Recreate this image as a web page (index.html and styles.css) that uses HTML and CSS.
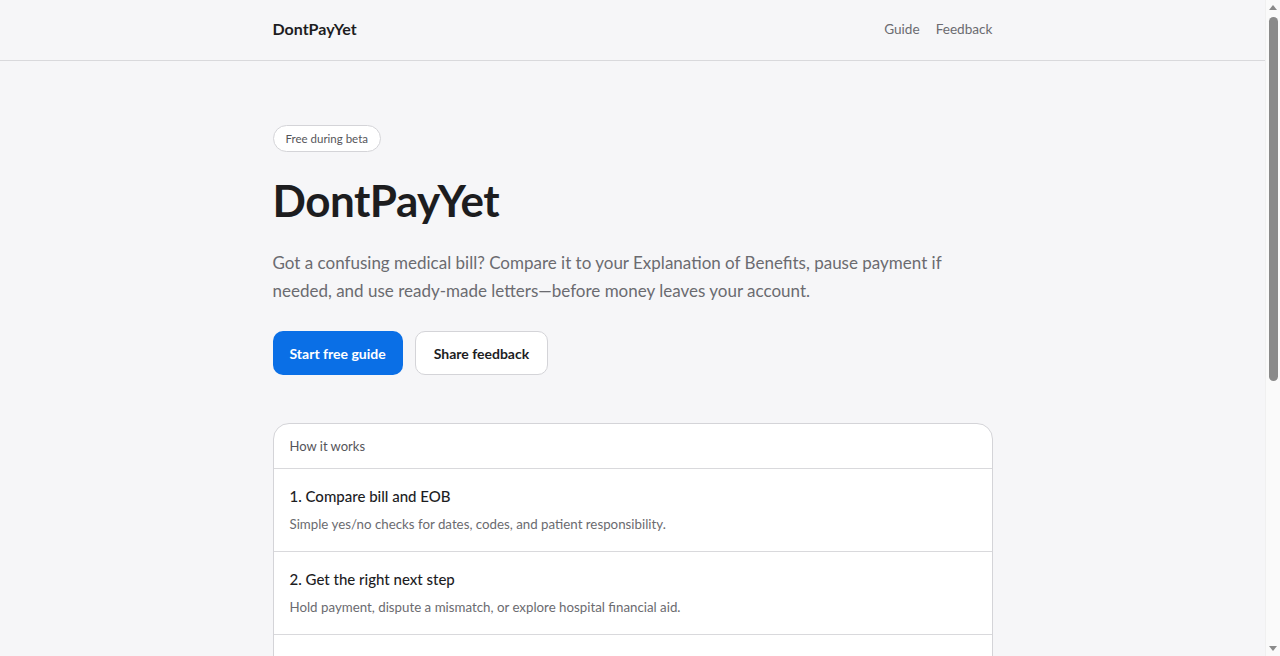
FILE: index.html
```html
<!DOCTYPE html>
<html lang="en">
<head>
<meta charset="utf-8">
<title>DontPayYet</title>
<link rel="stylesheet" href="styles.css">
</head>
<body>
<header class="topbar">
  <div class="wrap topbar-inner">
    <a class="logo" href="#">DontPayYet</a>
    <nav class="nav">
      <a href="#">Guide</a>
      <a href="#">Feedback</a>
    </nav>
  </div>
</header>
<main class="wrap hero">
  <span class="badge">Free during beta</span>
  <h1 class="title">DontPayYet</h1>
  <p class="lead">Got a confusing medical bill? Compare it to your Explanation of Benefits, pause payment if needed, and use ready-made letters—before money leaves your account.</p>
  <div class="actions">
    <a class="btn btn-primary" href="#">Start free guide</a>
    <a class="btn btn-secondary" href="#">Share feedback</a>
  </div>
  <section class="card">
    <div class="card-head">How it works</div>
    <div class="step">
      <h3>1. Compare bill and EOB</h3>
      <p>Simple yes/no checks for dates, codes, and patient responsibility.</p>
    </div>
    <div class="step">
      <h3>2. Get the right next step</h3>
      <p>Hold payment, dispute a mismatch, or explore hospital financial aid.</p>
    </div>
    <div class="step">
      <h3>3. Send a ready-made letter</h3>
      <p>Copy a template, fill in your details, and send it to the provider or insurer.</p>
    </div>
  </section>
  <p class="note">DontPayYet is not legal or medical advice. Always confirm details with your provider and insurer.</p>
</main>
<footer class="footer">
  <div class="wrap footer-inner">© DontPayYet</div>
</footer>
<div class="scrollbar" aria-hidden="true">
  <span class="sb-arrow sb-up"></span>
  <span class="sb-thumb"></span>
  <span class="sb-arrow sb-down"></span>
</div>
</body>
</html>
```
FILE: styles.css
```css
* { box-sizing: border-box; }
html, body { margin: 0; padding: 0; }
body {
  margin-right: 15px;
  background: #f6f6f8;
  color: #1d1d1f;
  font-family: "Lato", "Noto Sans", sans-serif;
}
a { color: inherit; text-decoration: none; }
.wrap { width: 720px; margin: 0 auto; }
.topbar { border-bottom: 1px solid #d9d9dc; height: 61px; }
.topbar-inner { height: 60px; display: flex; align-items: center; justify-content: space-between; padding-bottom: 3px; }
.logo { font-size: 16px; font-weight: 700; color: #1d1d1f; }
.nav { display: flex; gap: 16px; font-size: 13.6px; color: #6b6b70; }
.hero { padding-top: 64px; padding-bottom: 96px; }
.badge {
  display: inline-block; height: 27px; line-height: 25px; padding: 0 12px;
  border: 1px solid #d4d4d8; border-radius: 999px; background: #fff;
  font-size: 11.5px; color: #55555a;
}
.title { margin: 20px 0 0; font-size: 44px; line-height: 56px; font-weight: 700; letter-spacing: -0.5px; }
.lead { margin: 21px 0 0; max-width: 700px; font-size: 17px; line-height: 28px; color: #6b6b70; }
.actions { display: flex; gap: 12px; margin-top: 26px; }
.btn {
  display: inline-flex; align-items: center; justify-content: center;
  height: 44px; padding: 0 17px; border-radius: 10px; font-size: 14px; font-weight: 700;
}
.btn-primary { background: #0a6fe6; color: #fff; }
.btn-secondary { background: #fff; color: #1d1d1f; border: 1px solid #d4d4d8; padding: 0 18px; }
.card { margin-top: 48px; background: #fff; border: 1px solid #d4d4d8; border-radius: 16px; overflow: hidden; }
.card-head { height: 45px; display: flex; align-items: center; padding: 0 16px; font-size: 13px; color: #55555a; border-bottom: 1px solid #d9d9dc; }
.step { padding: 17px 16px 17px; border-bottom: 1px solid #d9d9dc; }
.step:last-child { border-bottom: 0; }
.step h3 { margin: 0; font-size: 15px; line-height: 20px; font-weight: 500; color: #1d1d1f; }
.step p { margin: 8px 0 0; font-size: 13.3px; line-height: 20px; color: #6b6b70; }
.note { margin: 24px 0 0; font-size: 13px; color: #6b6b70; line-height: 20px; }
.footer { border-top: 1px solid #d9d9dc; }
.footer-inner { padding: 24px 0 180px; font-size: 13px; color: #6b6b70; }

/* decorative classic scrollbar, overlaid on the right edge */
.scrollbar {
  position: fixed; top: 0; right: 0; width: 15px; height: 100vh;
  background: #fafafa; border-left: 1px solid #f0f0f0;
}
.sb-thumb {
  position: absolute; top: 17px; left: 3px; width: 9px; height: 364px;
  background: #8a8a8a; border-radius: 5px;
}
.sb-arrow {
  position: absolute; left: 3px; width: 0; height: 0;
  border-left: 4.5px solid transparent; border-right: 4.5px solid transparent;
}
.sb-up { top: 5px; border-bottom: 5px solid #8a8a8a; }
.sb-down { bottom: 5px; border-top: 5px solid #8a8a8a; }
```
